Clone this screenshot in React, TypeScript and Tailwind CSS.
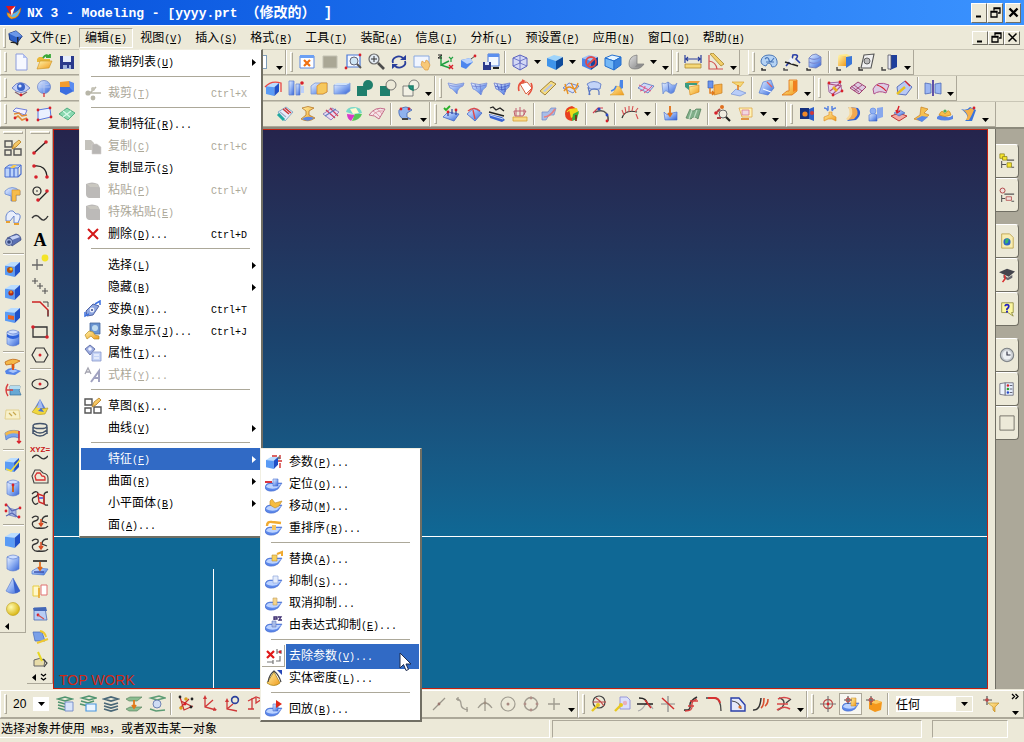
import React, { useState } from 'react';
import clsx from 'clsx';

type Shape = [d: string, fill?: string, stroke?: string, width?: number];

// Shared gradient fills, declared once in <Gradients />
const B = 'url(#blue)';
const Y = 'url(#gold)';
const G = 'url(#grey)';
const N = 'none';
const NAVY = '#2a3f9c';
const RED = '#d8202a';
const INK = '#222222';

const circle = (x: number, y: number, r: number) =>
  `M${x - r} ${y}a${r} ${r} 0 1 0 ${2 * r} 0a${r} ${r} 0 1 0 ${-2 * r} 0z`;
const rect = (x: number, y: number, w: number, h: number) => `M${x} ${y}h${w}v${h}h${-w}z`;
const dot = (x: number, y: number, fill = RED, r = 1.4): Shape => [circle(x, y, r), fill];
const line = (d: string, stroke = INK, width = 1.2): Shape => [d, N, stroke, width];

// Solid block with a light top and a dark right side
const cube = (x: number, y: number, s: number): Shape[] => [
  [`M${x} ${y + s * 0.25}l${s * 0.4} ${-s * 0.25}h${s * 0.6}l${-s * 0.35} ${s * 0.32}z`, '#b9dcff'],
  [`M${x} ${y + s * 0.25}l${s * 0.65} ${s * 0.07}v${s * 0.68}l${-s * 0.65} ${-s * 0.15}z`, '#5a9bf5'],
  [`M${x + s} ${y}v${s * 0.65}l${-s * 0.35} ${s * 0.35}v${-s * 0.68}z`, '#1f50c8'],
];
const cylinder = (x: number, y: number, w: number, h: number): Shape[] => [
  [`M${x} ${y + 2}v${h - 4}q${w / 2} 4 ${w} 0v${-(h - 4)}z`, B, '#5577cc', 0.6],
  [`M${x} ${y + 2}q${w / 2} -4 ${w} 0q${-w / 2} 4 ${-w} 0z`, '#cfdfff', '#5577cc', 0.6],
];
const slab = (fill: string): Shape => ['M1 9l6-5 10 3-6 7z', fill, '#5570c0', 0.8];
const pad: Shape[] = [
  ['M0 12q1-4 5-4h12l-4 6q-4 3-9 2-4-1-4-4z', '#5c88ea', '#3c62c4', 0.5],
  ['M1 12q1-3 4-3h11l-4 4q-6 2-11-1z', '#bcd3ff'],
];
const base: Shape[] = [...pad, ['M8 4h5v7H8z', B, '#4a6ed0', 0.6]];

const ICONS: Record<string, Shape[]> = {
  'New': [['M4 1h7l4 4v12H4z', '#f6f8ff', '#8c9cdc', 1], ['M11 1v4h4z', '#b5c3f2']],
  'Open': [['M2 6l2-2h4l1 2h6v3H2z', '#e9b83a'], ['M2 16L5 8h12l-3 7z', Y, '#c79020', 0.6], line('M8 5q3-5 7-1m0-3v3h-4', '#38a838', 1.8)],
  'Save': [[rect(2, 3, 14, 13), '#2b3a8c'], [rect(5, 3, 8, 6), '#e8eefc'], [rect(5, 12, 8, 4), '#9fb2dc'], [rect(9, 12, 2, 3), '#2b3a8c']],
  'Fit': [[rect(2, 3, 14, 12), '#fff', '#5b87e0', 1], [rect(2, 2, 14, 3), '#6ca0f4'], line('M6 7l6 6M12 7l-6 6', '#f07010', 2.2)],
  'Refresh': [[rect(2, 3, 14, 12), '#aaa795', '#c4c2b4', 1]],
  'Zoom Box': [[rect(3, 2, 13, 12), '#f4f8ff', '#4a78d8', 1.2], [circle(10, 8, 4), '#cfe6f5', '#667', 1], line('M13 11l4 4', '#555', 2), dot(2, 15), dot(16, 2)],
  'Zoom': [[circle(7, 6, 5), '#e2eaf2', '#6a6a6a', 1.2], line('M4 6h6M7 3v6', '#333', 1), line('M11 10l6 6', '#4c4c4c', 2.6)],
  'Rotate': [line('M3 10a6 5 0 0 1 10-5M15 8a6 5 0 0 1-10 5', NAVY, 1.8), ['M10 7h6V2z', NAVY], ['M8 11H2v5z', NAVY]],
  'Pan': [[rect(1, 3, 15, 11), '#f0f5ff', '#88a8e0', 1], ['M9 8l3 2 1-3 2 1 2 4-2 5h-3l-4-5z', '#f8c878', '#d89030', 0.6]],
  'Orient': [line('M5 3v9l8-4M5 12l9 3', '#20a040', 1.4), line('M2 2h4l-4 3h4', '#222', 1), line('M13 4l2 2 2-2M15 6v3', '#20a040', 1.2), line('M13 12l4 4M17 12l-4 4', RED, 1.4)],
  'Perspective': [['M2 7l9-2 3 4-7 7-5-2z', '#4d86ee'], ['M2 7l9-2 3 4-6 2z', '#b9d2fb'], line('M12 6l4-3', INK, 0.8), dot(16, 3)],
  'Layout': [[rect(6, 1, 11, 12), '#f2f7ff', '#4a78d8', 1], [rect(6, 1, 11, 3), '#5b8fee'], [rect(1, 9, 8, 8), '#2b3a8c'], [rect(3, 9, 4, 3), '#dfe7fa'], [rect(11, 14, 6, 2), '#222']],
  'Wireframe': [['M2 5l7-3 7 3v8l-7 4-7-4z', '#d3d8f4', '#5a62c0', 1], line('M2 5l7 3 7-3M9 8v9M9 2v8M2 13l7-3 7 3', '#5a62c0', 0.8)],
  'Shaded': [['M1 5l7-3 9 2-7 4z', '#9fd4fb'], ['M1 5l9 3v9l-9-4z', '#3f94ea'], ['M10 8l7-4v8l-7 5z', '#0f4c9c']],
  'Hide Shaded': [['M1 5l7-3 9 2-7 4z', '#9fc4fb'], ['M1 5l9 3v9l-9-4z', '#4a84ea'], ['M10 8l7-4v8l-7 5z', '#17459c'], [circle(10, 9, 5), N, '#e04848', 1.8], line('M7 12l7-7', '#e04848', 1.8)],
  'Edges': [['M1 5l7-3 9 2-7 4z', '#e4f4ff', '#2470d0', 1], ['M1 5l9 3v9l-9-4z', '#74b8f6', '#2470d0', 1], ['M10 8l7-4v8l-7 5z', '#3c84dc', '#2470d0', 1]],
  'Studio': [['M2 11q0-8 8-9v9h7q-3 5-9 5t-6-5z', G, '#777', 0.7], ['M10 11h7q-3 3-9 3z', '#8c8c8c']],
  'Distance': [line('M1 2v8M17 2v8M2 6h14M4 4L2 6l2 2M14 4l2 2-2 2', NAVY, 1.2), [rect(1, 11, 16, 4), '#f5d878', '#b08a30', 0.8]],
  'Angle': [line('M2 2v14h14M2 8q7 1 8 8', '#d05050', 1.2), ['M3 1l3-1 11 11-3 2z', '#f2cf6a', '#a8842c', 0.8]],
  'Sketch In': [['M1 8q1-6 8-6t8 6-5 6q-1-4-3-4t-3 3q-5-1-5-5z', '#b5d3f4', '#4a78b8', 1], line('M5 6q3-3 4 1t5-2M6 9h8', '#4a78b8'), line('M2 15v2h4', '#333', 1.6)],
  'Pencil': [line('M3 13l6-7 1-4q7-1 3 4l4 4', '#2a3fa8', 1.6), line('M2 9L15 13', '#222', 1.8), ['M8 4l4 4-3 3-4-3z', '#eef2fc'], line('M1 15v2h4', '#555', 1.6)],
  'Body': [['M3 5l3-3 4-1 5 3v8l-5 3-7-1z', B, '#6a78b8', 0.8], line('M3 5q6 3 12-1M3 9q6 3 12-1', '#7a8ad0'), line('M1 15v2h4', '#333', 1.4)],
  'Export': [['M3 2l9-1 5 3-8 1z', '#ffe98a'], [rect(3, 3, 8, 10), Y], ['M11 4l6-1v8l-6 4z', '#3a76d8'], line('M2 14v3h4', '#444', 1.4)],
  'Page': [['M6 2l10-1-3 14H3z', '#f0f0f0', '#555', 1.1], [circle(9, 8, 3), '#bbb', '#555', 0.9], line('M1 14v3h4', '#333', 1.4)],
  'Exit': [['M9 2h7v12l-7 3z', '#1f3f9c'], [rect(7, 2, 3, 14), '#e8eaf4', '#556', 0.8], line('M1 14v3h4', '#444', 1.4)],

  'Datum Plane': [['M0 9q8-11 18 0-9 9-18 0z', '#c4d0f6', '#5a70c0', 0.8], dot(9, 8, '#3c64c8', 4), dot(8, 7, '#dfe8ff', 1.6), line('M3 13l5 3M15 13l-5 3', '#806070'), dot(9, 16)],
  'Datum Axis': [[circle(9, 8, 6.5), B, '#7088c8', 0.8], line('M3 8h12M9 2v12M4 5q5 2 10 0', '#b8c8f0', 0.8), line('M9 14v4', RED)],
  'Extract': [['M2 3l9-1 3 3v4H2z', '#f29c2e'], ['M2 8h10l4 4-8 4-6-3z', '#3b6ee0'], ['M11 2l5 2v9l-4-4z', '#5a8cf0']],
  'Block Edge': [...cube(2, 4, 13), line('M1 8q6-7 16-4v9', '#e84848', 1.3)],
  'Pattern': [[rect(2, 2, 5, 14), B, '#5b7bd0', 0.7], [rect(9, 5, 4, 11), B, '#5b7bd0', 0.7], [rect(14, 7, 3, 7), '#bcd0fa'], dot(15, 4, RED, 1.8)],
  'Split Body': [['M1 7l4-3h12v9l-4 2H1z', B, '#7a98d8', 0.8], ['M7 7l4-3h6v9l-4 2H7z', '#f6c85c', '#e09020', 0.8]],
  'Trim Body': [['M1 6h12l4-2v8l-4 3H1z', B, '#7a98d8', 0.8], ['M1 6l3-2h13l-4 2z', '#cfe2fb']],
  'Unite': [[rect(1, 7, 10, 10), '#1f7f6c'], dot(12, 6, '#1f7f6c', 5)],
  'Subtract': [[rect(1, 7, 10, 10), '#1f7f6c'], [circle(12, 6, 5), '#ece9d8', '#555', 0.8]],
  'Intersect': [[rect(1, 7, 10, 10), '#f2f0e4', '#666', 0.8], [circle(12, 6, 5), '#f2f0e4', '#666', 0.8], ['M7 7h4v4q-4-1-4-4z', '#1f9f88', '#1f7f6c', 1.6]],
  'Ruled': [['M1 4q8 3 16 0l-1 3q-6 2-6 8Q5 9 3 9z', B, '#6f86d8', 0.7], line('M2 6q7 3 14 0', '#8ea0e0')],
  'Through Curves': [['M1 4q8 3 16 0l-1 4q-4 2-5 8Q5 10 3 10z', B, '#6f86d8', 0.7], line('M5 5l2 5M10 5l1 8M2 7q7 2 14-1', '#6f7fd0', 0.8)],
  'Curve Mesh': [['M1 4q8 3 16 0l-1 4q-4 2-5 8Q5 10 3 10z', B, '#5f70cc', 0.7], line('M4 5l2 5M8 5l1 7M12 5v8M2 7q7 3 14-1M5 10q5 1 8 0', '#4458c0', 0.8)],
  'Swept': [['M4 5l7-2 5 6-6 6z', '#fff', '#d86040', 1], line('M3 12Q1 4 8 2l-2-1m2 1L7 4M15 4q3 6-3 12', '#e8503c', 1.6)],
  'Section': [['M1 12L12 2l5 3L6 16z', '#f4dc80', '#9a7830', 0.9], ['M4 12l8-7 2 1-8 7z', '#b8c4e8']],
  'Bridge': [slab('#d8e2fb'), line('M2 12Q6 6 10 9t6-5M3 5l3 10M9 4l5 10', '#e89020', 1.4)],
  'N-Sided': [['M2 5q7-5 14 0l-1 5H5z', '#c3d4f8', '#5574c4', 0.8], line('M4 16q0-6 5-6t5 3v3M3 8l2 8', '#5574c4')],
  'Transition': [['M12 1h3v8l-4 2z', '#4a86e8'], ['M8 7l4 1 4 8H2q5-2 6-9z', Y, '#d89820', 0.5], line('M3 12q4-1 5-5', '#4a86e8', 1.5)],
  'Offset Face': [slab('#cdd8f8'), line('M3 12q5-1 5-5M7 14q5-3 8-7M2 6l12 6', '#e05080', 1)],
  'Thicken': [['M2 4q3 2 6-1l4 3q3 1 5-2l-3 9q-3 3-6 0t-5 2z', B, '#6d8cd0', 0.7], line('M8 3l1 10', '#5570c0', 0.8)],
  'Fold': [['M2 4l4-2h11l-3 4H2z', '#f0a040'], ['M6 8l10-2v7l-9 3z', Y, '#d88818', 0.6], ['M2 4h12v2H6v5L2 8z', '#3c9c80']],
  'Sew': [[rect(2, 2, 5, 7), '#6b94ec', '#3a60b8', 0.7], ['M8 6l8-1v9l-8 2z', '#f7b048', '#c88020', 0.7], line('M4 9v5h4M6 12l2 2-2 2', '#e07818', 1.4)],
  'Quilt': [['M3 3h12l-4 5z', '#f6d978', '#d89820', 0.6], ['M2 15l5-5 10 4-6 3z', '#b9cdf8', '#6584d0', 0.6], line('M9 6v5', '#e07818', 1.5)],
  'Law Extension': [['M5 3l8-2 3 8-6 7-9-2z', B, '#4472d0', 0.6], line('M9 3l5 5', '#e06060'), line('M5 10l8 3', '#fff')],
  'Flange': [['M8 1h8v11l-5 4H1l5-4h2z', Y, '#e07010', 0.8], ['M12 2h4v9l-4 2z', '#f08020']],
  'Datum Points': [['M2 4l12-1 2 9-8 4-5-3z', '#e8d6ec', '#98609c', 0.9], line('M3 5l12 2-8 8M4 12L14 4', '#b05080'), dot(3, 4), dot(14, 3), dot(16, 12), dot(7, 16), line('M7 8l4 4', '#e8b020', 2.6)],
  'X-Form': [['M1 9l8-6 8 5-7 7z', '#dcc8e0', '#a04070', 1], line('M5 6l8 6M5 12l8-6M2 7l8 6', '#a04070', 0.9)],
  'Degree': [['M1 10q4-9 16-4l-3 8q-7-3-12 1z', '#dccbe4', '#b0508c', 1], line('M5 6q6 2 9 6', RED, 1.2)],
  'Key Surface': [['M2 8l8-6 7 6-6 8-8-1z', '#b9c9f4', '#4f68b8', 0.9], line('M2 15l8-7', '#e8c020', 2.4), line('M10 2l5 5', RED)],
  'Mirror': [['M1 4l6 1v9l-6 1zM17 4l-6 1v9l6 1z', '#9bb6f2', '#4c68b8', 0.8], line('M9 1v16', '#6050a8', 2)],

  'Bounded Plane': [['M1 6l3-3 11 2-2 5z', '#f2f0ff', '#7080d8', 1], line('M2 9l5-1 3 3 5-1M3 13l3-2 4 4 5-2', '#e08a38', 1.6), dot(3, 13), dot(15, 15)],
  'Four Point': [['M3 5l12-2 1 9-13 3z', '#eaf0ff', '#5a78e0', 1], dot(3, 5), dot(15, 3), dot(16, 12), dot(3, 15)],
  'Green Sheet': [['M1 9l8-6 8 5-7 7z', '#8ad8b0', '#38a070', 0.8], line('M5 6l7 6M5 12l8-6', '#d8fae8')],
  'Strip': [[rect(0, 4, 8, 9), '#4d6ec4']],
  'Wrap': [['M2 7l8-5 7 5-8 9z', '#e6ecfa', '#70a0c0', 0.8], line('M2 9l6 6', '#20a8a0', 3), line('M7 4l6 5M9 3l6 5', '#d03838', 1.6), line('M4 7l6 5', '#a0b0c8')],
  'Spindle': [['M3 3q6-3 12 0l-5 3v4l6 3q-7 5-14 1l5-4V6z', Y, '#b87828', 0.8], ['M3 14q5-4 12-1-5 5-12 1z', '#5c86e4']],
  'Trim Sheet': [['M1 9l9-6 7 4-8 8z', '#e8dcf4', '#8070b8', 0.8], line('M4 5l9 8M8 3l8 8', '#d04060', 1.3), line('M3 11l11-7', '#6080c0')],
  'Color Map': [['M1 7q1-5 8-5 7 0 8 6l-6 2z', '#78d8c8'], ['M2 9l8 1-4 6q-4-2-4-7z', '#d838c8'], ['M10 9h7q-2 6-10 7z', '#58c858'], ['M5 4l6-1 3 5-6 1z', '#fffbd0']],
  'Pink Sheet': [['M1 10Q7 1 17 4l-6 10q-4-4-10-4z', '#f6e4e8', '#c06080', 0.9], line('M5 6q4 2 7 6M9 4q3 2 5 5M4 11q5-6 11-5', '#d88898', 0.8)],
  'Surface Edit': [['M2 5q7-6 13 0l-5 3v4l4 2H6q-5-3-4-9z', '#8fb2ee', '#3f64b4', 0.8], line('M5 14h6', '#444', 2), dot(12, 4), dot(4, 4)],
  'Face Normal': [['M1 12l5-5 11 2-5 7z', B, '#4468c8', 0.8], line('M2 3l2 2 4-4', '#28b028', 1.8), line('M10 9V4M14 10V5M6 11V6', NAVY), dot(6, 7), dot(14, 5)],
  'Curvature': [['M2 9l7-6 8 5-7 8z', B, '#4468c8', 0.8], line('M3 6q6-5 12 0M8 5l2 9', '#e04848', 1.4)],
  'Reflection': [['M1 9l13 3 3 3-3 2-12-4z', '#3a64d4'], line('M2 3l3-1 3 3 4-2 4 3M1 7l15 4', '#222', 1.3), line('M2 10l13 4', '#c8d8fa', 1)],
  'Draft': [[rect(2, 12, 14, 4), '#f8d888', '#d8a030', 0.8], line('M3 6h12l-3 5H4zM5 3v8M9 2v9M13 4v6', '#c06070', 1)],
  'Deviation': [['M2 7h6l3-4h5l-2 7h-5l-3 5H2z', '#a8bde8', '#7088c8', 0.7], line('M4 12q6 0 11-8', '#e88080', 1.6)],
  'Slope': [['M2 9q0-7 7-8l5 3-5 12q-7-1-7-7z', '#e84020'], ['M6 4l8-1 2 6-8 4z', '#f0d818'], ['M10 9l6-3-2 8-5 2z', '#38b038'], line('M4 7q2-3 5-2', '#f0e020'), line('M13 10v6', '#802010', 1.6)],
  'Curve Arc': [line('M3 7q8-3 11 1t2 8', '#555', 1.4), line('M1 8l5-5h5', '#d04050', 1.2), dot(7, 4, '#2848c8', 1.6), dot(15, 10, '#2848c8', 1.4), dot(15, 16)],
  'Comb': [line('M1 13q3-9 15-6', '#333', 1.2), line('M3 10L1 5M5 8L4 2M8 7V1M11 6l1-5M14 7l3-4M15 9l2 5', '#d85050', 1.1)],
  'Probe': [['M2 7q4 5 8 1l5-1v8H3z', B, '#3c66cc', 0.6], line('M8 1v9M6 8l2 3 2-3', '#e07018', 1.8)],
  'Green Wave': [['M1 13L5 4q3 4 6 0h5l-3 10q-4-4-7 0z', '#7fae88', '#4f7c58', 0.7], line('M7 5L4 14M12 5l-3 8', '#c0dcc4')],
  'Search Geometry': [[circle(9, 9, 4), '#f0ece0', '#666', 1], line('M12 12l4 4', '#222', 2.2), dot(8, 2, '#e07020', 2), dot(2, 8, RED, 1.8), line('M3 13h4M6 4L3 7', '#b04040', 2)],
  'Feature Tag': [['M2 3h13v9H5z', '#fff4b8', '#e0a848', 0.8], [rect(5, 5, 7, 5), '#f0d8e0', '#d87890', 0.8], line('M4 14h8', '#e08020', 1.6)],
  'Face Blend': [[rect(2, 3, 9, 11), '#16307c'], ['M11 4l5-2v14l-5-2z', '#2f5fc8'], [circle(7, 9, 2.6), '#f08828'], dot(14, 8, '#d03838', 2)],
  'Soft Blend': [['M8 7h3v3l4 2v4l-4-2H7l-4 2v-4l5-2z', Y, '#e08818', 0.6], line('M3 3q3 0 4 3M15 3q-3 0-4 3M7 1v4M11 1v4', '#5884e0', 1.5)],
  'Edge Blend': [['M4 2l10 1q5 6-2 12l-9 1q8-6 1-14z', '#2f62d8'], ['M5 2l7 1q4 6-2 11l-7 1q8-5 2-13z', '#f2a850'], ['M4 2h3q4 7-3 13l-2-1q6-5 2-12z', '#f8d898']],
  'Chamfer': [['M2 10l4-2 4 2v6H2z', B, '#3c66cc', 0.6], ['M10 3l6-1v10l-6 2z', '#88a8ec'], [circle(6, 6, 3), '#8fb0f2', '#5c86e4', 0.6]],
  'Hollow': [['M1 11l8-3 8 3-8 5z', '#f4a8a0', '#c03838', 1], ['M4 8l6-3 5 3-6 3z', B, '#4060b8', 0.6], line('M9 1l-2 6M6 5l1 3 3-2', RED, 1.4)],
  'Thread': [['M8 2l7 2-4 4 5 2-7 6-8-2 6-4z', '#f5c050', '#c88020', 0.7], ['M3 14l6-3 6 1-6 5z', '#5a8ae8']],
  'Pad': [['M1 12q4-4 8-1t8-1v4q-8 3-16 0z', '#5884e4'], ['M3 10q3-7 6-1 4-7 6 1-6 3-12 0z', '#f6be48', '#c88018', 0.6], dot(9, 6, '#50b058', 1.6)],
  'Bend': [['M2 4q6 2 9-2l6 3-4 11H6q6-5-4-12z', '#3a74dc'], ['M4 5q5 1 8-2l3 2q-2 5-5 10H7q4-6-3-10z', '#f5b048'], dot(15, 3)],

  'Sketch': [line('M1 2h7v6H1zM1 11h6v5H1zM10 10h7v6h-7z', '#555', 1.4), ['M8 10l2-5 5-4 2 2-5 5z', Y, '#a87010', 0.7]],
  'Extrude': [['M1 6l4-3h12l-3 3v9H1z', '#bcd3fa', '#4a6fd0', 1], line('M6 6v9M10 6v9M1 6h13M14 15l3-3V3', '#4a6fd0'), ['M6 6l3-3h4l-3 3z', '#f4c850']],
  'Revolve': [['M1 6q7-7 15 0v4h-4v6H7v-5l-6-2z', B, '#5c80d0', 0.7], ['M8 5h8v5h-4v6H8z', '#f6bc4c', '#d89020', 0.6]],
  'Sweep Guide': [['M2 13V8q2-6 7-5l3 3q5-1 4 4l-2 5h-4V8L6 13z', '#e8eefb', '#6a88d0', 1], line('M2 14h4M10 16h5', '#e8a030', 1.8)],
  'Tube': [['M3 7l9-4q5 1 5 6l-9 6z', '#5a70b4', '#35457c', 0.7], ['M6 6l7-2 3 2-8 3z', '#c8d4f4'], [circle(5, 11, 3.6), '#9fb0dc', '#35457c', 0.7], dot(5, 11, '#33457c', 1.8)],
  'Hole': [...cube(1, 2, 15), dot(6, 10, '#b05010', 3), dot(7, 9, '#f4c020', 1.6)],
  'Boss': [...cube(1, 2, 15), dot(7, 10, '#b02c18', 2.6), dot(7, 9, '#e8862a', 1.4)],
  'Pocket': [...cube(1, 2, 15), ['M4 9l6 1v4l-6-1z', '#e86020']],
  'Groove': [...cylinder(3, 1, 12, 16), ['M3 5q6 4 12 0v3q-6 4-12 0z', '#2f62d8']],
  'Emboss': [['M1 4q8-5 15-1l-6 3v4H8V6L2 7z', '#f4b848', '#c06a18', 0.8], ['M1 13q3-3 7-3l9 3-6 4-9-1z', '#5484e8'], ['M4 13l5-2 5 2-5 2z', '#a8c4fa'], line('M9 6v6', '#e05010', 1.8)],
  'Groove Arrow': [['M6 5h10q-2 5 1 9H6z', '#68a8d4', '#356f9c', 0.7], ['M6 5h10v3H6z', '#b4dcf0'], line('M4 3q-4 6 0 12M2 9h7', '#d84040', 1.4)],
  'Curve Set': [['M2 6h13l1 9H1z', '#f7f0c8', '#e0ca80', 0.8], line('M5 9l3 3M9 8l3 3', '#c8a850')],
  'Dimension Face': [['M1 6q5-4 14-2v7q-8-3-13 2z', '#7aa4ec', '#4468b8', 0.6], ['M1 6q5-4 14-2v3Q6 5 2 9z', '#f4b848'], line('M15 4v12M13 14l2 2 2-2', RED, 1.4)],
  'Trim Cube': [...cube(1, 2, 14), line('M2 13l5 2 9-11', '#f0dc40', 1.6)],
  'Cylinder Pin': [...cylinder(3, 1, 12, 16), line('M9 13V7', '#c86020', 2), dot(9, 6, RED)],
  'Assembly Curves': [['M5 6l7 2v7l-7-2z', '#a9b7e4', '#6c7cc0', 0.8], line('M2 2l6 7 8-3M2 14l6-3 7 5', '#5868b4'), dot(2, 3), dot(16, 6), dot(2, 9), dot(15, 15)],
  'Block': [...cube(1, 2, 15)],
  'Cylinder': cylinder(3, 1, 12, 16),
  'Cone': [['M9 1l7 13q-7 5-14 0z', B, '#5577cc', 0.6], ['M9 1l7 13q-2 2-5 2z', '#3a62cc']],
  'Sphere': [[circle(9, 9, 6.5), 'url(#ball)', '#b89a10', 0.6]],

  'Line': [line('M3 14L15 3', '#222', 1.3), dot(3, 14, RED, 1.8), dot(15, 3, RED, 1.8)],
  'Arc': [line('M4 4q11-1 12 11', '#222', 1.3), dot(3, 4, RED, 1.8), dot(16, 15, RED, 1.8), dot(5, 15, RED, 1.8)],
  'Lines and Arcs': [line(circle(6, 6, 4), '#222', 1.2), dot(6, 6, '#666', 0.9), line('M7 16l9-9', '#222', 1.2), dot(7, 15, RED, 1.8), dot(16, 6, RED, 1.8)],
  'Spline': [line('M1 10q4-5 8 0t8-2', '#333', 1.4)],
  'Point': [line('M6 5v11M1 11h11', '#666', 1.3), dot(14, 4, '#f4e428', 3.4)],
  'Point Set': [line('M4 1v6M1 4h6M9 6v6M6 9h6M14 11v6M11 14h6', '#555', 1.1)],
  'Trim Corner': [line('M1 2h8l8 8v6', '#cc2222', 1.5), line('M12 2h5v5M17 10v7', '#444', 1)],
  'Rectangle': [line(rect(2, 4, 14, 10), '#333', 1.3), dot(2, 4, RED, 1.8), dot(16, 14, RED, 1.8)],
  'Polygon': [line('M5 2h8l4 7-4 7H5L1 9z', '#333', 1.2), dot(9, 9, RED, 1.5)],
  'Ellipse': [line('M1 9a8 5 0 1 0 16 0a8 5 0 1 0-16 0z', '#333', 1.2), dot(9, 9, RED, 1.5)],
  'Conic': [['M9 1l7 12q-7 6-14 0z', '#5d80d8'], ['M1 14l6-7 3 4 7-1-3 6q-7 2-13-2z', '#f0d840', '#b89820', 0.6], ['M9 1l3 9H6z', '#a8bcf0'], ['M7 13l3-3 3 4z', '#4a70d0']],
  'Helix': [line('M2 5a7 2.600 0 1 0 14 0a7 2.600 0 1 0-14 0M2 9q7 6 14 0M2 12q7 6 14 0M2 6v7M16 6v7', '#44546c', 1.5)],
  'Offset Curve': [line('M4 3h5l3 3q5 1 5 5v5H3L1 9z', '#444', 1.1), line('M6 6h3l2 3q3 0 3 2v2H5L4 9z', '#d83030', 1.3)],
  'Bridge Curve': [line('M1 4q4-4 6-1 0 3-3 4-4 1-2 5t5 1M17 2q-4 0-4 4v6q0 4 4 3', '#333', 1.3), line('M7 4l6 2v8l-5-2z', '#d02828', 1.4), line('M8 8h4', '#5050e0', 1.6)],
  'Join Curve': [line('M1 5q3-3 6-1 1 3-3 4-4 1-2 5 2 3 6 2 7 1 9-2M17 3q-6 0-6 5l5 2', '#333', 1.3), line('M10 6v7M8 10l2 3 2-3', '#d84a20', 1.5)],
  'Project Curve': [['M1 12l5-3 11 1-4 6-12-1z', B, '#4878d0', 0.7], line('M2 2h14', '#222', 1.6), line('M9 3v8M7 8l2 3 2-3', '#e06818', 1.7), line('M3 13h10', NAVY)],
  'Combine': [['M2 4h6v10H2z', '#fff8c8', '#e8cc40', 1], ['M10 3h6v10h-6z', '#fff', '#e07070', 1], line('M8 6v10', '#e8a020', 1.4)],
  'Intersection Curve': [['M3 3h11l2 12H3z', '#b8cdf4', '#4a68b4', 0.8], ['M2 3l13-1 1 4H3z', '#4468b8'], dot(7, 10), line('M7 10l6 4', '#d05050')],
  'Section Curve': [['M2 4h9l3 9H4z', '#7aa0e8', '#4468b8', 0.7], line('M9 3q5 1 6 6M6 15l11-4', '#f0c830', 2)],
  'Unwrap': [['M3 9q5-3 11 0l-1 6H3z', '#e8dca8', '#666', 1], line('M7 1l4 9', '#e8d820', 2), line('M12 8l4 4-3 4', '#444', 1.2)],

  'Layer Settings': [line('M2 4l7-2 7 2-7 2zM2 7l7 2 5-1M2 10l7 2M2 13l7 2', '#4f9470', 1.5), ['M9 7h8v9H9z', '#d8e4fa', '#7088c8', 0.9]],
  'Layer Window': [line('M3 3l7-2 7 2-7 2zM2 6l7 2 6-2M1 9l8 2', '#4f9470', 1.6), [rect(7, 9, 10, 7), '#eaf4ff', '#4a98e0', 1.2]],
  'Move Layer': [line('M2 4l7-2 7 2-7 2zM2 8l7 2 7-2M2 11l7 2 7-2M2 14l7 2 7-2', '#4a6878', 1.7)],
  'Copy Layer': [['M1 4l4-2h12l-5 4H4z', '#8cbc90', '#4f7c58', 0.6], ['M1 14l4-2h12l-5 4H4z', '#8cbc90', '#4f7c58', 0.6], line('M9 5v8M7 10l2 3 2-3', '#e07818', 1.8)],
  'Layer View': [line('M3 3l8-2 6 2-8 2zM2 14l6 2 9-1', '#5c9c74', 1.6), [circle(9, 9, 4), '#cfdcf4', '#7084b4', 1]],
  'WCS Dynamics': [line('M3 2l4 13 9-4M4 6l10 5M3 13l9-9', '#c83030', 1.2), dot(3, 2, '#222'), dot(4, 13, '#d8a020', 1.8), dot(9, 4, '#d8a020', 1.8), dot(14, 12, '#222'), dot(8, 9), dot(15, 4, '#222')],
  'WCS Origin': [line('M5 2v10l11 3M5 12l8-7', '#d03838', 1.3), ['M5 0l2 4H3zM17 15l-3-3-1 4z', '#d03838']],
  'WCS Rotate': [line('M4 6v8l10 2M4 14l6-5', '#d03838', 1.3), line(circle(12, 5, 3.4), NAVY, 1.6), ['M4 3l2 4H2z', '#d03838']],
  'WCS Orient': [line('M2 6l8-4 6 2M6 3v11M10 3v5l6-4M2 14h6', '#d03838', 1.3)],
  'Snap End': [line('M3 15L15 3', '#9a968a', 1.3), dot(9, 9, '#9a7870', 1.4)],
  'Snap Control': [line('M3 4q5 0 5 5t7 6M5 2v4M14 12v5', '#a09c90', 1.3)],
  'Snap Mid': [line('M2 13q7-10 14 0M9 3v13', '#a09c90', 1.3), dot(9, 8, '#a09080', 1.4)],
  'Snap Center': [line(circle(9, 9, 7), '#a09c90', 1.2), dot(9, 9, '#a88880', 1.5)],
  'Snap Quadrant': [line(circle(9, 9, 6.5), '#a09c90', 1.4), dot(9, 3, '#b09088'), dot(9, 15, '#b09088'), dot(3, 9, '#b09088'), dot(15, 9, '#b09088')],
  'Snap Existing': [line('M9 3v12M3 9h12', '#a09c90', 1.4)],
  'Edit Curve': [line(circle(9, 7, 6), '#444', 1.2), line('M3 7h13M6 3q5 3 8 8', '#c04848'), line('M2 16l5-5', '#e8c820', 2.4), dot(8, 10, '#e8c820', 2)],
  'Edit Param': [['M7 2h7l3 3v9H7z', '#dce0fa', '#9090d8', 0.9], dot(12, 8, '#e8b0c0', 2.2), line('M2 16l5-5', '#e8c820', 2.4), dot(8, 10, '#e8c820', 2)],
  'Trim Curve': [line('M2 16q4-1 7-6t8 4', '#aaa', 1.2), line('M3 3q8 0 8 6M1 9h16', '#222', 1.5), line('M9 5l6 8', '#d03030', 1.5)],
  'Divide Curve': [line('M9 1v16M2 9h14', '#888', 1.2), line('M3 3l12 11', '#d03030', 1.5)],
  'Stretch': [line('M2 15q7 1 6-4t7-9', '#333', 1.6), line('M3 16q8 0 7-5t5-7M8 6h8M6 11h6', '#d84040', 1.3)],
  'Fillet': [line('M1 3h9q6 1 6 13', '#444', 1.3), line('M3 3h6q5 0 6 5', '#d83030', 2)],
  'Curve Length': [['M3 3h8l6 7v6H3z', '#e4e8fb', '#2a3fa8', 1.4], line('M4 6q8 1 9 8', '#444'), dot(12, 12, '#e07020', 1.6)],
  'Smooth': [line('M2 15q7 1 8-12', '#333', 1.5), line('M10 13q3-2 3-10M14 11q3-2 3-7', '#d85030', 1.6)],
  'Template': [line('M5 3q5 1 5 5t-6 7M17 4l-5 4', '#444', 1.4), line('M4 4q6-3 12 0M3 9h11M3 15q7-5 13-1', '#d84848', 1.6)],
  'Target': [line(circle(9, 9, 4.500), '#c04848', 1.3), line('M9 1v16M1 9h16', '#777', 1.2), dot(9, 9)],
  'Snap Body': [...pad, ['M9 3h5v8H9z', Y, '#c08020', 0.5], line('M6 1v8M2 5h8', '#555', 1.1), [circle(6, 5, 2), N, '#c04040', 1]],
  'Snap Solid': [['M4 7l7-2 6 2-1 8-6 2-6-3z', '#f4981c'], ['M4 7l7-2 6 2-6 2z', '#fcc860'], line('M6 1v9M1 5h9', '#555', 1.1), [circle(6, 5, 2), N, '#c04040', 1]],
  'Filter': [['M6 8h11l-4 4v5l-2-2v-3z', Y, '#b88818', 0.6], line('M5 1v9M1 5h9', '#555', 1.2), dot(5, 5, '#c04848', 1.8)],

  'Cut': [line('M2 9h15M6 9l6-6', '#b8b6a8', 1.6), dot(4, 9, '#b8b6a8', 2.6), dot(9, 14, '#b8b6a8', 2.4), dot(9, 5, '#c4c2b6', 2)],
  'Copy': [['M1 3h6l3 3v7H1z', '#c4c2bc'], ['M8 7h5l4 3v7H8z', '#b8b6b4', '#d4d2cc', 0.6]],
  'Paste': [['M2 3q6-3 12 0l2 4v10H5q-3-1-3-4z', '#bcbab8'], ['M3 3h10l2 3H6z', '#c9c7c0']],
  'Delete': [line('M4 4l10 10M14 4L4 14', '#d41818', 2)],
  'Transform': [['M2 11L9 4l6 2-6 9-6 1z', '#8ea6e0', '#44589c', 0.9], dot(8, 10, '#eef2fc', 2.4), dot(8, 10, '#35488c', 1), line('M11 4l5-3v4M5 14l-4 2v-4', '#3c70e0', 1.5)],
  'Object Display': [['M6 1h10v11H6z', '#6a94d0', '#48689c', 0.8], [circle(11, 6, 3), '#c0dcf0'], ['M1 13l4-4 4 1 2 3 4 1v3h-5l-3-3-4 3z', Y, '#b89028', 0.7]],
  'Properties': [['M1 5l5-4 5 4-5 6z', '#9cace0', '#50609c', 0.8], dot(6, 5, '#f4f6ff', 1.8), [rect(8, 8, 9, 9), '#c6d4f6', '#8898cc', 0.8], line('M10 11h5M10 14h5', '#fff')],
  'Style': [line('M1 8l3-6 3 6M2 6h4', '#a4a4b0', 1.3), line('M7 16l8-11v11M10 12h5', '#a0a2c0', 2)],
  'Feature Parameters': [...cube(1, 4, 12), line('M7 3h5M15 2v4M13 8h4M15 10v5', '#d03030', 1.4), dot(14, 5, '#777')],
  'Positioning': [...base, line('M0 7h7', RED, 1.8)],
  'Move': [...pad, ['M5 8V4l2-2 3 4 7-2-3 5-4 2z', '#f6bc40', '#c08820', 0.6]],
  'Reorder': [...pad, line('M2 7q0-5 5-4l9 1', '#f0aa30', 2.4), ['M7 6h4v5H7z', '#f6c460']],
  'Replace': [...pad, ['M7 5h5v6H7z', '#f6d060', '#c09030', 0.6], line('M12 4l5-2v4', '#f0aa30', 2)],
  'Suppress': [...pad, ['M8 4h5v7H8z', '#e4ecfc', '#9ab0e0', 0.8]],
  'Unsuppress': [...pad, ['M8 4h4v7H8z', '#f6d48c', '#c0a060', 0.6]],
  'Suppress Expression': [...pad, ['M7 5h4v6H7z', '#a8bce8', '#6478b8', 0.6], line('M9 4V1h3v2H9M13 1h3l-2 3h3', '#3c2c70', 1.3)],
  'Remove Parameters': [line('M3 4l7 7M10 4l-7 7', '#e01818', 2.2), line('M13 2v5M13 5h4M17 3v4M16 9v5h-4M3 15h6M9 13v4', '#777', 1.2), dot(16, 5)],
  'Density': [['M9 3l6 11q-6 5-13 0z', Y, '#a88418', 0.8], line('M3 13q1-7 6-11 5 4 7 11', '#444', 1.2), ['M12 1h5v5z', '#2848b8']],
  'Playback': [...base, ['M11 0l6 4-6 4z', '#e02818']],

  'Assembly Navigator': [[rect(1, 1, 5, 5), '#f6e430', '#867c18', 0.8], [rect(4, 4, 5, 4), '#f6e430', '#867c18', 0.8], [rect(9, 11, 5, 5), '#f6e430', '#867c18', 0.8], line('M9 8h8M3 9v8M3 13h5M14 16h3', '#555', 1.2)],
  'Part Navigator': [[circle(4, 4, 2.800), '#f0e0dc', '#b04848', 1.1], [rect(8, 11, 6, 4), '#f0e0dc', '#b04848', 0.9], line('M6 8h11M3 9v8M3 13h4M14 16h3', '#555', 1.2)],
  'Web': [['M3 1h9l4 4v12H3z', '#f8ecb0', '#b89c40', 0.9], dot(9, 10, '#2a64c8', 4), ['M7 8q2-3 4-1l-1 4-3 1z', '#3cb868']],
  'Training': [['M0 6l9-4 9 3-7 6z', '#44444c'], ['M5 9l5 3 5-3v3l-5 3-5-3z', '#66666e'], line('M6 9l1 4-3 4', '#d83030', 1.8)],
  'Help': [['M3 2h13v11h-2l2 4-6-4H3z', '#fbf6a0', '#8c8838', 0.9], line('M7 6q0-2 2-2t2 2-2 3v1', '#2020c0', 2), dot(9, 12, '#2020c0', 1.2)],
  'History': [[circle(9, 9, 7.500), '#c8ccd0', '#7c8084', 1.2], [circle(9, 9, 5), '#edf0f2'], line('M9 5v4h4', '#334', 1.3)],
  'Palette': [['M1 3l6-1v14l-6-1z', '#eef4fc', '#667', 0.9], [rect(7, 2, 9, 14), '#e6eefb', '#667', 0.9], dot(10, 5, RED), dot(10, 9, '#28a028'), dot(10, 13, '#2848c8'), line('M12 5h3M12 9h3M12 13h3', '#667')],
  'Blank': [line(rect(1, 1, 16, 16), '#6c6a60', 1)],
  'Modeling': [['M1 4l8-3 7 6-6 8-8-4z', '#2f62c8', '#122c74', 1], ['M1 4l8-3 7 6-7 1z', '#6c98e8'], line('M3 14q6-1 8 3M11 8v8', '#222', 1.4)],
  'NX': [['M2 9q7 4 15-5-1 11-10 12-5-2-5-7z', '#f4a020', '#b05c10', 0.5], ['M4 11q6 1 12-6-2 9-8 9z', '#58b8f0'], ['M1 2h10l-4 11z', '#d81820'], ['M11 2L7 13 6 7z', '#fff']],
};

const Icon = ({ name, size = 18 }: { name: string; size?: number }) => (
  <svg width={size} height={size} viewBox="0 0 18 18" className="shrink-0" aria-hidden="true">
    {ICONS[name].map(([d, fill = 'none', stroke = 'none', width = 1], i) => (
      <path key={i} d={d} fill={fill} stroke={stroke} strokeWidth={width} />
    ))}
  </svg>
);

const Gradients = () => (
  <svg width="0" height="0" className="absolute" aria-hidden="true">
    <defs>
      <linearGradient id="blue" x1="0" y1="0" x2="1" y2="1">
        <stop offset="0" stopColor="#eef4ff" />
        <stop offset="0.5" stopColor="#8fb0f2" />
        <stop offset="1" stopColor="#3462d4" />
      </linearGradient>
      <linearGradient id="gold" x1="0" y1="0" x2="1" y2="1">
        <stop offset="0" stopColor="#fff3a8" />
        <stop offset="1" stopColor="#f09a1c" />
      </linearGradient>
      <linearGradient id="grey" x1="0" y1="0" x2="1" y2="1">
        <stop offset="0" stopColor="#e0e0e0" />
        <stop offset="1" stopColor="#7c7c7c" />
      </linearGradient>
      <radialGradient id="ball" cx="0.35" cy="0.35" r="0.7">
        <stop offset="0" stopColor="#fffbb0" />
        <stop offset="1" stopColor="#d8b410" />
      </radialGradient>
    </defs>
  </svg>
);

// CJK text at 12px, Latin parts in a half-width mono face; "&" marks the underlined access key
const Label = ({ text }: { text: string }) => (
  <>
    {text.split(/([\x20-\x7e]+)/).map((part, i) =>
      i % 2 === 0 ? part : (
        <span key={i} className="font-['Liberation_Mono',monospace] text-[10px]">
          {part.split(/(&.)/).map((s, j) => (s[0] === '&' ? <u key={j}>{s[1]}</u> : s))}
        </span>
      )
    )}
  </>
);

// '|' separator, 'v' drop-down arrow, '.' overflow arrow, anything else is an icon name
const ToolItem = ({ item }: { item: string }) => {
  if (item === '|') return <div className="mx-[2px] h-[22px] w-[2px] border-l border-[#aca899] bg-white" />;
  if (item === 'v' || item === '.') {
    return (
      <button aria-label="More" className={clsx('flex h-[22px] w-3 justify-center', item === 'v' ? 'items-center' : 'items-end pb-[3px]')}>
        <svg width="7" height="4" viewBox="0 0 7 4"><path d="M0 0h7L3.500 4z" fill="#000" /></svg>
      </button>
    );
  }
  return (
    <button aria-label={item} className={clsx('flex h-[22px] w-[23px] items-center justify-center', item === 'Snap Body' && 'border border-[#aca899] bg-[#f7f6f0]')}>
      <Icon name={item} />
    </button>
  );
};

const Grip = () => <div className="mr-[2px] ml-[3px] h-5 w-[3px] border border-white border-r-[#aca899] border-b-[#aca899]" />;

const Group = ({ items, className, children }: { items: string[]; className?: string; children?: React.ReactNode }) => (
  <div className={clsx('flex h-full shrink-0 items-center border-r border-b border-l border-r-[#aca899] border-b-[#aca899] border-l-white', className)}>
    <Grip />
    {items.map((item, i) => <ToolItem key={i} item={item} />)}
    {children}
  </div>
);

const TOOLBARS = [
  {
    left: ['New', 'Open', 'Save'],
    right: ['.'],
    groups: [
      ['Fit', 'Refresh', 'Zoom Box', 'Zoom', 'Rotate', 'Pan', 'Orient', 'Perspective', 'Layout', '|', 'Wireframe', 'v', 'Shaded', 'v', 'Hide Shaded', 'Edges', 'Studio', 'v', '.'],
      ['Distance', 'Angle', '.'],
      ['Sketch In', 'Pencil', 'Body', '|', 'Export', 'Page', 'Exit', '.'],
    ],
    width: 'w-[286px]',
    groupClass: '',
  },
  {
    left: ['Datum Plane', 'Datum Axis', 'Extract'],
    right: ['Block Edge', 'Pattern', 'Split Body', 'Trim Body', 'Unite', 'Subtract', 'Intersect', '.'],
    groups: [
      ['Ruled', 'Through Curves', 'Curve Mesh', 'Swept', 'Section', 'Bridge', 'N-Sided', 'Transition', '|', 'Offset Face', 'Thicken', 'Fold', 'Sew', 'Quilt', '|', 'Law Extension', 'Flange', '.'],
      ['Datum Points', 'X-Form', 'Degree', 'Key Surface', '|', 'Mirror', '.'],
    ],
    width: 'w-[435px]',
    groupClass: '',
  },
  {
    left: ['Bounded Plane', 'Four Point', 'Green Sheet'],
    right: ['Strip', 'Wrap', 'Spindle', 'Trim Sheet', 'Color Map', 'Pink Sheet', '|', 'Surface Edit', '.'],
    groups: [
      ['Face Normal', 'Curvature', 'Reflection', 'Draft', '|', 'Deviation', 'Slope', '|', 'Curve Arc', '|', 'Comb', 'v', '|', 'Probe', 'Green Wave', '|', 'Search Geometry', 'Feature Tag', 'v', '.'],
      ['Face Blend', 'Soft Blend', 'Edge Blend', 'Chamfer', 'Hollow', 'Thread', 'Pad', 'Bend', '.'],
    ],
    width: 'w-[430px]',
    groupClass: 'pr-1',
  },
];

const FEATURE_TOOLS = [
  'Sketch', 'Extrude', 'Revolve', 'Sweep Guide', 'Tube', '|', 'Hole', 'Boss', 'Pocket', 'Groove', '|',
  'Emboss', 'Groove Arrow', 'Curve Set', 'Dimension Face', '|', 'Trim Cube', 'Cylinder Pin', 'Assembly Curves', '|',
  'Block', 'Cylinder', 'Cone', 'Sphere',
];
const CURVE_TOOLS = [
  'Line', 'Arc', 'Lines and Arcs', 'Spline', 'Text', 'Point', 'Point Set', 'Trim Corner', 'Rectangle', 'Polygon', '|',
  'Ellipse', 'Conic', 'Helix', 'XYZ', 'Offset Curve', 'Bridge Curve', 'Join Curve', 'Join Curve', 'Project Curve',
  'Combine', 'Intersection Curve', 'Section Curve', 'Unwrap',
];

const SideColumn = ({ tools, expand }: { tools: string[]; expand?: boolean }) => (
  <div className="flex w-[26px] flex-col items-center self-start border-r border-b border-[#aca899] pt-[2px] pl-px">
    <div className="mb-[2px] h-[3px] w-5 border border-white border-r-[#aca899] border-b-[#aca899]" />
    {tools.map((tool, i) =>
      tool === '|' ? (
        <div key={i} className="my-[2px] h-[2px] w-[21px] border-t border-[#aca899] bg-white" />
      ) : (
        <button key={i} aria-label={tool} className="flex h-[23px] w-[23px] items-center justify-center">
          {tool === 'Text' ? (
            <span className="font-['Liberation_Serif',serif] text-lg leading-none font-bold">A</span>
          ) : tool === 'XYZ' ? (
            <span className="flex flex-col items-center font-['Liberation_Sans',sans-serif] text-[8px] leading-[8px] font-bold text-[#c81818]">
              XYZ=
              <svg width="16" height="6" viewBox="0 0 16 6"><path d="M0 4q4-5 8-1t8-1" fill="none" stroke="#333" strokeWidth="1.300" /></svg>
            </span>
          ) : (
            <Icon name={tool} />
          )}
        </button>
      )
    )}
    <button aria-label="Expand" className="flex h-3 w-full items-center gap-1 pl-[4px]">
      <svg width="4" height="7" viewBox="0 0 4 7"><path d="M4 0v7L0 3.500z" /></svg>
      {expand && <svg width="7" height="8" viewBox="0 0 7 8"><path d="M1 1l2.500 2L6 1M1 5l2.500 2L6 5" fill="none" stroke="#000" strokeWidth="1.300" /></svg>}
    </button>
  </div>
);

interface MenuEntry {
  label: string;
  icon?: string;
  keys?: string;
  disabled?: boolean;
  sub?: boolean;
}

const EDIT_MENU: (MenuEntry | null)[] = [
  { label: '撤销列表(&U)', sub: true },
  null,
  { label: '裁剪(&T)', icon: 'Cut', keys: 'Ctrl+X', disabled: true },
  null,
  { label: '复制特征(&R)...' },
  { label: '复制(&C)', icon: 'Copy', keys: 'Ctrl+C', disabled: true },
  { label: '复制显示(&S)' },
  { label: '粘贴(&P)', icon: 'Paste', keys: 'Ctrl+V', disabled: true },
  { label: '特殊粘贴(&E)', icon: 'Paste', disabled: true },
  { label: '删除(&D)...', icon: 'Delete', keys: 'Ctrl+D' },
  null,
  { label: '选择(&L)', sub: true },
  { label: '隐藏(&B)', sub: true },
  { label: '变换(&N)...', icon: 'Transform', keys: 'Ctrl+T' },
  { label: '对象显示(&J)...', icon: 'Object Display', keys: 'Ctrl+J' },
  { label: '属性(&I)...', icon: 'Properties' },
  { label: '式样(&Y)...', icon: 'Style', disabled: true },
  null,
  { label: '草图(&K)...', icon: 'Sketch' },
  { label: '曲线(&V)', sub: true },
  null,
  { label: '特征(&F)', sub: true },
  { label: '曲面(&R)', sub: true },
  { label: '小平面体(&B)', sub: true },
  { label: '面(&A)...' },
];

const FEATURE_MENU: (MenuEntry | null)[] = [
  { label: '参数(&P)...', icon: 'Feature Parameters' },
  { label: '定位(&O)...', icon: 'Positioning' },
  { label: '移动(&M)...', icon: 'Move' },
  { label: '重排序(&R)...', icon: 'Reorder' },
  null,
  { label: '替换(&A)...', icon: 'Replace' },
  { label: '抑制(&S)...', icon: 'Suppress' },
  { label: '取消抑制...', icon: 'Unsuppress' },
  { label: '由表达式抑制(&E)...', icon: 'Suppress Expression' },
  null,
  { label: '去除参数(&V)...', icon: 'Remove Parameters' },
  { label: '实体密度(&L)...', icon: 'Density' },
  null,
  { label: '回放(&B)...', icon: 'Playback' },
];

const Cursor = () => (
  <svg width="13" height="20" viewBox="0 0 13 20" className="pointer-events-none absolute top-[7px] right-2" aria-hidden="true">
    <path d="M1 1v15l3.500-3.500L7 18.500l2.500-1L7 12h5z" fill="#fff" stroke="#1c2c50" strokeWidth="1" />
  </svg>
);

const MENU_BOX = 'absolute z-10 border border-[#f1efe2] border-r-2 border-r-[#716f64] border-b-2 border-b-[#716f64] bg-white';
const MENU_LINE = 'mx-[10px] mt-[3px] mb-[5px] h-px bg-[#aca899]';

const FeatureMenu = () => {
  const [active, setActive] = useState('去除参数(&V)...');

  return (
    <div role="menu" className={clsx(MENU_BOX, 'top-0 left-full w-[162px] pt-[2px] text-black')}>
      {FEATURE_MENU.map((entry, i) => {
        if (!entry) return <div key={i} className={MENU_LINE} />;
        const on = entry.label === active;
        return (
          <button key={i} role="menuitem" onMouseEnter={() => setActive(entry.label)} className="relative flex h-[22px] w-full items-center px-px text-left">
            <span className={clsx('flex h-[22px] w-[23px] shrink-0 items-center justify-center', on && 'border-r border-b border-[#aca899]')}>
              <Icon name={entry.icon!} />
            </span>
            <span className={clsx('ml-px flex-1 pl-[3px] leading-[22px] whitespace-nowrap', on && 'bg-[#316ac5] text-white')}>
              <Label text={entry.label} />
            </span>
            {on && <Cursor />}
          </button>
        );
      })}
    </div>
  );
};

const EditMenu = () => (
  <div role="menu" className={clsx(MENU_BOX, 'top-full left-0 w-[184px] px-px pt-px')}>
    {EDIT_MENU.map((entry, i) => {
      if (!entry) return <div key={i} className={MENU_LINE} />;
      const open = entry.label === '特征(&F)';
      return (
        <div key={i} className="relative">
          <button
            role="menuitem"
            disabled={entry.disabled}
            className={clsx('flex h-[22px] w-full items-center pr-1 text-left', entry.disabled && 'text-[#aca899]', open && 'bg-[#316ac5] text-white')}
          >
            <span className="flex w-[27px] shrink-0 items-center pl-[3px]">{entry.icon && <Icon name={entry.icon} />}</span>
            <span className="flex-1 whitespace-nowrap"><Label text={entry.label} /></span>
            {entry.keys && <span className="pr-[9px]"><Label text={entry.keys} /></span>}
            {entry.sub && <svg width="4" height="7" viewBox="0 0 4 7"><path d="M0 0v7l4-3.500z" fill="currentColor" /></svg>}
          </button>
          {open && <FeatureMenu />}
        </div>
      );
    })}
  </div>
);

const MENUS = ['文件(&F)', '编辑(&E)', '视图(&V)', '插入(&S)', '格式(&R)', '工具(&T)', '装配(&A)', '信息(&I)', '分析(&L)', '预设置(&P)', '应用(&N)', '窗口(&O)', '帮助(&H)'];

const WindowButtons = ({ small }: { small?: boolean }) => (
  <div className="flex">
    {[
      { name: 'Minimize', d: 'M2 9.500h5', w: 2 },
      { name: 'Restore', d: 'M4 3.500V1h6v5H8M1 4.500h6V10H1zM1 5h6M4 1.500h6', w: 1.3 },
      { name: 'Close', d: 'M1.500 1.500l8 8M9.500 1.500l-8 8', w: small ? 1.5 : 2.4 },
    ].map(({ name, d, w }) => (
      <button
        key={name}
        aria-label={name}
        className={clsx(
          'flex w-4 items-center justify-center border border-white border-r-[#716f64] border-b-[#716f64] bg-[#ece9d8]',
          small ? 'h-[14px]' : 'h-5',
          name === 'Close' && !small && 'ml-[2px]'
        )}
      >
        <svg width="11" height="11" viewBox="0 0 11 11"><path d={d} fill="none" stroke="#000" strokeWidth={w} /></svg>
      </button>
    ))}
  </div>
);

const RESOURCE_TABS = [
  ['Assembly Navigator', 'Part Navigator'],
  ['Web', 'Training', 'Help'],
  ['History', 'Palette', 'Blank'],
];

const App = () => {
  const [layer, setLayer] = useState('20');

  return (
    <div className="flex h-screen min-h-[720px] flex-col overflow-hidden bg-[#ece9d8] font-['Noto_Sans_CJK_SC',sans-serif] text-xs text-black">
      <Gradients />

      <header className="flex h-[25px] shrink-0 items-center bg-linear-to-r from-[#0650dc] to-[#3b93ff] pr-[3px] pl-[5px] text-white">
        <Icon name="NX" size={17} />
        <h1 className="ml-[5px] flex-1 font-['Liberation_Mono','Noto_Sans_CJK_SC',monospace] text-[13px] font-bold whitespace-pre">
          NX 3 - Modeling - [yyyy.prt <span className="text-sm">（修改的） ]</span>
        </h1>
        <WindowButtons />
      </header>

      <nav className="flex h-6 shrink-0 items-center border-t border-white pr-1">
        <Grip />
        <Icon name="Modeling" size={16} />
        <div className="flex h-full flex-1 gap-px">
          {MENUS.map((menu) => {
            const open = menu === '编辑(&E)';
            return (
              <div key={menu} className="relative flex items-center">
                <button className={clsx('h-5 border px-[5px] whitespace-nowrap', open ? 'border-[#aca899] border-r-white border-b-white' : 'border-transparent')}>
                  <Label text={menu} />
                </button>
                {open && <EditMenu />}
              </div>
            );
          })}
        </div>
        <WindowButtons small />
      </nav>

      {TOOLBARS.map((bar, i) => (
        <div key={i} className="flex h-[26px] shrink-0 items-center border-t border-[#c9c6b6]">
          <Group items={bar.left} className={bar.width}>
            <div className="flex flex-1 items-center justify-end">
              {i === 0 && <span className="mr-[6px] h-[14px] w-5 border border-[#7f9db9] bg-white" />}
              {bar.right.map((item, j) => <ToolItem key={j} item={item} />)}
            </div>
          </Group>
          {bar.groups.map((items, j) => <Group key={j} items={items} className={clsx(bar.groupClass, i === 0 && j === 2 && 'ml-2')} />)}
        </div>
      ))}

      <main className="flex min-h-0 flex-1 border-t-2 border-[#8c8a7c]">
        <SideColumn tools={FEATURE_TOOLS} />
        <div className="ml-px"><SideColumn tools={CURVE_TOOLS} expand /></div>
        <section className="flex min-w-0 flex-1 flex-col border border-[#c4200f] bg-[#0f6895]">
          <div className="basis-[73%] border-b border-white bg-linear-to-b from-[#25244c] via-[#1b426c] to-[#0f6895]" />
          <div className="relative flex-1">
            <div className="ml-[17%] h-full pt-8"><div className="h-full w-px bg-white" /></div>
            <p className="absolute bottom-0 left-[5px] font-['Liberation_Sans',sans-serif] text-sm leading-4 text-[#d22814]">TOP WORK</p>
          </div>
        </section>
        <aside className="ml-[7px] flex w-[29px] flex-col gap-3 border-l border-[#716f64] bg-[#aca899] pt-[15px]">
          {RESOURCE_TABS.map((tabs, i) => (
            <div key={i} className="flex flex-col">
              {tabs.map((tab) => (
                <button key={tab} aria-label={tab} className="flex h-[34px] w-[23px] items-center justify-center rounded-r-sm border border-l-0 border-t-white border-r-[#716f64] border-b-[#716f64] bg-[#ece9d8]">
                  <Icon name={tab} size={16} />
                </button>
              ))}
            </div>
          ))}
        </aside>
      </main>

      <div className="mt-px flex h-[28px] shrink-0 items-center border-t border-white">
        <Group items={[]} className="w-[578px]">
          <label className="relative ml-[2px] flex items-center">
            <select aria-label="Layer" value={layer} onChange={(e) => setLayer(e.target.value)} className="h-4 w-[38px] appearance-none pl-[2px] font-['Liberation_Sans',sans-serif] text-xs leading-4">
              <option>20</option>
              <option>21</option>
            </select>
            <span className="pointer-events-none absolute right-0 flex h-[14px] w-4 items-center justify-center bg-white">
              <svg width="7" height="4" viewBox="0 0 7 4"><path d="M0 0h7L3.500 4z" /></svg>
            </span>
          </label>
          <div className="ml-1 flex flex-1 items-center">
            {['Layer Settings', 'Layer Window', 'Move Layer', 'Copy Layer', 'Layer View', '|', 'WCS Dynamics', 'WCS Origin', 'WCS Rotate', 'WCS Orient'].map((item) => <ToolItem key={item} item={item} />)}
          </div>
          {['Snap End', 'Snap Control', 'Snap Mid', 'Snap Center', 'Snap Quadrant', 'Snap Existing', '.'].map((item) => <ToolItem key={item} item={item} />)}
        </Group>
        <Group items={['Edit Curve', 'Edit Param', 'Trim Curve', 'Divide Curve', 'Stretch', 'Fillet', 'Curve Length', 'Smooth', 'Template', '.']} />
        <Group items={['Target', 'Snap Body', 'Snap Solid', '|']} className="flex-1">
          <label className="relative mr-[6px] ml-[5px] flex items-center">
            <select aria-label="Filter" className="h-4 w-[77px] appearance-none bg-white text-xs leading-4">
              <option>任何</option>
            </select>
            <span className="pointer-events-none absolute right-0 flex h-4 w-[18px] items-center justify-center border border-white bg-[#ece9d8]">
              <svg width="7" height="4" viewBox="0 0 7 4"><path d="M0 0h7L3.500 4z" /></svg>
            </span>
          </label>
          <ToolItem item="Filter" />
          <button aria-label="More tools" className="ml-auto flex h-[22px] flex-col items-center justify-between pr-1">
            <svg width="8" height="7" viewBox="0 0 8 7"><path d="M1 1l2.500 2.500L1 6M4.500 1L7 3.500 4.500 6" fill="none" stroke="#000" strokeWidth="1.300" /></svg>
            <svg width="7" height="4" viewBox="0 0 7 4"><path d="M0 0h7L3.500 4z" /></svg>
          </button>
        </Group>
      </div>

      <footer className="flex h-6 shrink-0 items-start border-t border-[#aca899] pt-px pr-4">
        <p className="h-[18px] w-[550px] border-r border-b border-white pl-px leading-4 text-black">
          <Label text="选择对象并使用 MB3，或者双击某一对象" />
        </p>
        <div className="ml-[2px] h-[18px] flex-1 border border-[#aca899] border-r-white border-b-white" />
        <div className="ml-[10px] h-[18px] w-[76px] border border-[#aca899] border-r-white border-b-white" />
      </footer>
    </div>
  );
};

export default App;
